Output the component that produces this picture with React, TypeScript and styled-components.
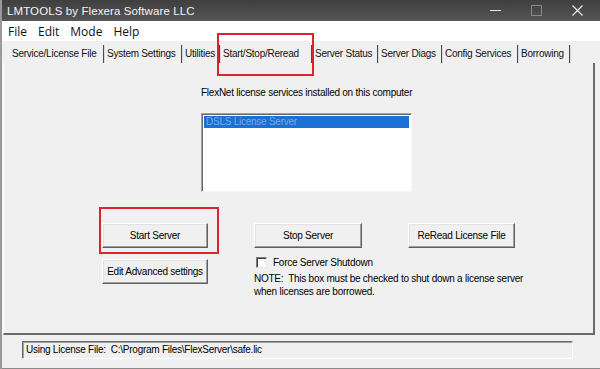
import React from "react";
import styled, { createGlobalStyle } from "styled-components";

const uiFont = `"Liberation Sans", Arial, sans-serif`;

const GlobalStyle = createGlobalStyle`
    html, body {
        margin: 0;
        padding: 0;
        background: #f0f0f0;
    }
    body {
        font-family: ${uiFont};
        font-size: 10px;
        letter-spacing: -0.25px;
        color: #000;
    }
`;

const tabs = [
    { label: "Service/License File", width: 95 },
    { label: "System Settings", width: 78 },
    { label: "Utilities", width: 38 },
    { label: "Start/Stop/Reread", width: 92, active: true },
    { label: "Server Status", width: 66 },
    { label: "Server Diags", width: 64 },
    { label: "Config Services", width: 76 },
    { label: "Borrowing", width: 52 },
];

const menus = ["File", "Edit", "Mode", "Help"];

const App = () => {
    return (
        <>
            <GlobalStyle />
            <Window>
                <TitleBar>
                    <Title>LMTOOLS by Flexera Software LLC</Title>
                    <Controls>
                        <ControlButton>
                            <svg width="11" height="11" viewBox="0 0 11 11">
                                <line x1="0" y1="5.5" x2="11" y2="5.5" stroke="#e6e6e6" strokeWidth="1" />
                            </svg>
                        </ControlButton>
                        <ControlButton>
                            <svg width="11" height="11" viewBox="0 0 11 11">
                                <rect x="0.5" y="0.5" width="10" height="10" fill="none" stroke="#8a8a8a" strokeWidth="1" />
                            </svg>
                        </ControlButton>
                        <ControlButton>
                            <svg width="11" height="11" viewBox="0 0 11 11">
                                <path d="M0.5 0.5 L10.5 10.5 M10.5 0.5 L0.5 10.5" stroke="#f2f2f2" strokeWidth="1.1" />
                            </svg>
                        </ControlButton>
                    </Controls>
                </TitleBar>

                <MenuBar>
                    {menus.map((m) => (
                        <MenuItem key={m}>{m}</MenuItem>
                    ))}
                </MenuBar>

                <Client>
                    <TabStrip>
                        {tabs.map((t) => (
                            <Tab key={t.label} $width={t.width} $active={t.active}>
                                {t.label}
                            </Tab>
                        ))}
                    </TabStrip>

                    <TabPanel>
                        <ServiceBlock>
                            <Caption>FlexNet license services installed on this computer</Caption>
                            <ListBox>
                                <ListRow $selected>DSLS License Server</ListRow>
                            </ListBox>
                        </ServiceBlock>

                        <ButtonGrid>
                            <Highlighted>
                                <PushButton>Start Server</PushButton>
                            </Highlighted>
                            <PushButton>Stop Server</PushButton>
                            <PushButton>ReRead License File</PushButton>

                            <EditCell>
                                <PushButton>Edit Advanced settings</PushButton>
                            </EditCell>
                            <OptionCell>
                                <CheckRow>
                                    <CheckBox />
                                    <span>Force Server Shutdown</span>
                                </CheckRow>
                                <Note>
                                    NOTE:&nbsp; This box must be checked to shut down a license server
                                    <br />
                                    when licenses are borrowed.
                                </Note>
                            </OptionCell>
                        </ButtonGrid>
                    </TabPanel>

                    <StatusBar>
                        <StatusField>Using License File:&nbsp; C:\Program Files\FlexServer\safe.lic</StatusField>
                    </StatusBar>
                </Client>
            </Window>
        </>
    );
};

export default App;

const Window = styled.div`
    width: 600px;
    height: 369px;
    display: flex;
    flex-direction: column;
    background: #f0f0f0;
    box-sizing: border-box;
    border-left: 2px solid #9a9a9a;
    overflow: hidden;
`;

const TitleBar = styled.div`
    height: 21px;
    display: flex;
    align-items: center;
    justify-content: space-between;
    background: linear-gradient(#3f3f3f, #555555);
    padding-left: 5px;
`;

const Title = styled.div`
    font-family: ${uiFont};
    font-size: 11.5px;
    letter-spacing: 0.1px;
    color: #f4f4f4;
`;

const Controls = styled.div`
    display: flex;
    height: 100%;
    margin-right: 2px;
`;

const ControlButton = styled.div`
    width: 41px;
    height: 100%;
    display: flex;
    align-items: center;
    justify-content: center;
`;

const MenuBar = styled.div`
    height: 20px;
    display: flex;
    align-items: center;
    background: #ffffff;
    padding-left: 6px;
    gap: 11px;
`;

const MenuItem = styled.span`
    font-family: "Open Sans", "Noto Sans", sans-serif;
    font-size: 12px;
    letter-spacing: 0;
    color: #111;
`;

const Client = styled.div`
    flex: 1;
    display: flex;
    flex-direction: column;
    padding: 0 5px 2px 1px;
    border-bottom: 1px solid #8a8a8a;
`;

const TabStrip = styled.div`
    height: 22px;
    display: flex;
    align-items: flex-end;
    padding-left: 6px;
`;

const Tab = styled.div<{ $width: number; $active?: boolean }>`
    position: relative;
    width: ${(p) => p.$width}px;
    height: 18px;
    box-sizing: border-box;
    padding: 3px 0 0 3px;
    border-right: 1px solid #4a4a4a;
    box-shadow: 1px 0 0 #d8d8d8;
    white-space: nowrap;
    color: #111;

    ${(p) =>
        p.$active &&
        `
        &::after {
            content: "";
            position: absolute;
            top: -12px;
            left: -3px;
            right: -3px;
            bottom: -13px;
            border: 2px solid #d8262c;
        }
    `}
`;

const TabPanel = styled.div`
    height: 272px;
    box-sizing: border-box;
    border-left: 1px solid #ffffff;
    border-right: 2px solid #6a6a6a;
    border-bottom: 2px solid #6a6a6a;
    padding-top: 23px;
`;

const ServiceBlock = styled.div`
    display: flex;
    flex-direction: column;
    margin-left: 197px;
`;

const Caption = styled.div`
    line-height: 13px;
    margin-bottom: 14px;
`;

const ListBox = styled.div`
    width: 211px;
    height: 79px;
    box-sizing: border-box;
    background: #ffffff;
    border: 1px solid;
    border-color: #a0a0a0 #f8f8f8 #f8f8f8 #a0a0a0;
    box-shadow: inset 1px 1px 0 #696969;
    padding: 2px 2px 0 2px;
`;

const ListRow = styled.div<{ $selected?: boolean }>`
    height: 12px;
    line-height: 12px;
    padding-left: 2px;
    font-size: 10px;
    background: ${(p) => (p.$selected ? "#1a70d4" : "transparent")};
    color: ${(p) => (p.$selected ? "#7fa9e0" : "#000")};
`;

const ButtonGrid = styled.div`
    display: grid;
    grid-template-columns: 106px 108px 107px;
    column-gap: 46px;
    margin-left: 98px;
    margin-top: 31px;
`;

const PushButton = styled.button`
    width: 100%;
    height: 25px;
    box-sizing: border-box;
    padding: 0;
    font-family: ${uiFont};
    font-size: 10px;
    letter-spacing: -0.25px;
    white-space: nowrap;
    color: #000;
    background: #f0f0f0;
    border: 1px solid;
    border-color: #ffffff #5f5f5f #5f5f5f #ffffff;
    box-shadow: inset -1px -1px 0 #a0a0a0, inset 1px 1px 0 #e3e3e3;
`;

const Highlighted = styled.div`
    position: relative;

    &::after {
        content: "";
        position: absolute;
        top: -16px;
        left: -3px;
        right: -11px;
        bottom: -6px;
        border: 2px solid #d8262c;
    }
`;

const EditCell = styled.div`
    margin-top: 11px;
`;

const OptionCell = styled.div`
    grid-column: 2 / span 2;
    display: flex;
    flex-direction: column;
    margin-top: 8px;
`;

const CheckRow = styled.div`
    display: flex;
    align-items: center;
    gap: 6px;
    margin-left: 2px;
    height: 12px;
`;

const CheckBox = styled.span`
    width: 11px;
    height: 11px;
    box-sizing: border-box;
    background: #ffffff;
    border: 1px solid;
    border-color: #7a7a7a #e8e8e8 #e8e8e8 #7a7a7a;
    box-shadow: inset 1px 1px 0 #404040;
`;

const Note = styled.div`
    margin-top: 4px;
    line-height: 13px;
    white-space: nowrap;
`;

const StatusBar = styled.div`
    flex: 1;
    display: flex;
    align-items: flex-start;
    padding: 6px 0 0 19px;
`;

const StatusField = styled.div`
    width: 551px;
    height: 18px;
    box-sizing: border-box;
    padding-left: 3px;
    line-height: 16px;
    border: 1px solid;
    border-color: #6a6a6a #ffffff #ffffff #6a6a6a;
    box-shadow: inset 1px 1px 0 #a0a0a0;
    white-space: nowrap;
`;
